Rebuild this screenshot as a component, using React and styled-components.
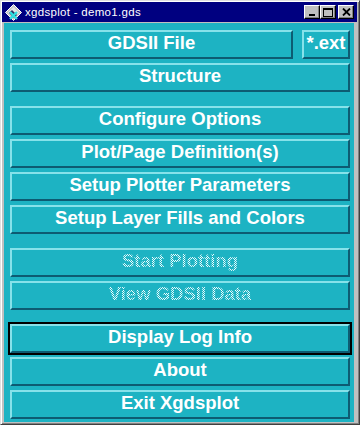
import React from 'react';
import styled, { createGlobalStyle, css } from 'styled-components';

const GlobalStyle = createGlobalStyle`
  html, body {
    margin: 0;
    padding: 0;
    background: #c0c0c0;
  }
`;

const Window = styled.div`
  width: 360px;
  height: 425px;
  box-sizing: border-box;
  background: #c0c0c0;
  border-top: 1px solid #dfdfdf;
  border-left: 1px solid #dfdfdf;
  border-right: 1px solid #404040;
  border-bottom: 1px solid #404040;
  box-shadow: inset 1px 1px 0 #ffffff, inset -1px -1px 0 #808080;
  padding: 1px 2px 4px 1px;
  display: flex;
  flex-direction: column;
`;

const TitleBar = styled.div`
  height: 20px;
  background: #000080;
  display: flex;
  align-items: center;
  padding: 0 3px 0 3px;
  flex-shrink: 0;
`;

const TitleText = styled.span`
  font-family: "Liberation Sans", Arial, sans-serif;
  font-size: 11.5px;
  color: #ffffff;
  margin-left: 3px;
  flex: 1;
  letter-spacing: 0.3px;
`;

const TitleButtons = styled.div`
  display: flex;
  align-items: center;
`;

const TitleButton = styled.div`
  width: 16px;
  height: 14px;
  box-sizing: border-box;
  background: #c0c0c0;
  border-top: 1px solid #ffffff;
  border-left: 1px solid #ffffff;
  border-right: 1px solid #000000;
  border-bottom: 1px solid #000000;
  box-shadow: inset -1px -1px 0 #808080;
  display: flex;
  align-items: center;
  justify-content: center;
  margin-left: ${(p) => (p.$gap ? '2px' : '0')};
`;

const Client = styled.div`
  flex: 1;
  margin: 1px 3px 0 2px;
  background: #1db3c3;
  padding: 7px 4px 3px 6px;
  display: flex;
  flex-direction: column;
  gap: 14px;
`;

const Group = styled.div`
  display: flex;
  flex-direction: column;
  gap: 4px;
`;

const Row = styled.div`
  display: flex;
  gap: 9px;
`;

const stipple = css`
  color: transparent;
  background: conic-gradient(#f0fcfd 25%, transparent 0 50%, #f0fcfd 0 75%, transparent 0) 0 0 / 2px 2px;
  -webkit-background-clip: text;
  background-clip: text;
`;

const Button = styled.div`
  flex: ${(p) => (p.$grow ? '1 1 0' : '0 0 auto')};
  width: ${(p) => (p.$narrow ? '48px' : 'auto')};
  height: 29px;
  box-sizing: border-box;
  border-style: solid;
  border-width: 2px;
  border-color: #86e2ea #0d5b72 #0d5b72 #86e2ea;
  background: #1db3c3;
  display: flex;
  align-items: center;
  justify-content: center;
  font-family: "Liberation Sans", Arial, Helvetica, sans-serif;
  font-weight: bold;
  font-size: 18.5px;
  color: #ffffff;
  white-space: nowrap;
  ${(p) => p.$focused && css`
    outline: 2px solid #000000;
    outline-offset: 0;
  `}
`;

const Label = styled.span`
  line-height: 1;
  margin-top: -2px;
  ${(p) => p.$disabled && stipple}
`;

const AppIcon = () => (
  <svg width="17" height="17" viewBox="0 0 17 17">
    <polygon points="8.5,0.5 16.5,8.5 8.5,16.5 0.5,8.5" fill="#c8c8c8" stroke="#ffffff" strokeWidth="1" />
    <polygon points="8.5,3 14,8.5 8.5,14 3,8.5" fill="#e6e6e6" />
    <polygon points="4,9 9,14 12,11 7,6" fill="#303060" />
    <path d="M5 8 L12 15 M12 8 L5 15" stroke="#2fe0e0" strokeWidth="2.4" />
  </svg>
);

const App = () => (
  <>
    <GlobalStyle />
    <Window>
      <TitleBar>
        <AppIcon />
        <TitleText>xgdsplot - demo1.gds</TitleText>
        <TitleButtons>
          <TitleButton>
            <svg width="8" height="8" viewBox="0 0 8 8">
              <rect x="1" y="6" width="6" height="2" fill="#000" />
            </svg>
          </TitleButton>
          <TitleButton>
            <svg width="10" height="9" viewBox="0 0 10 9">
              <rect x="0.5" y="0.5" width="9" height="8" fill="none" stroke="#000" />
              <rect x="0" y="0" width="10" height="2" fill="#000" />
            </svg>
          </TitleButton>
          <TitleButton $gap>
            <svg width="9" height="8" viewBox="0 0 9 8">
              <path d="M1 0.5 L8 7.5 M8 0.5 L1 7.5" stroke="#000" strokeWidth="1.8" />
            </svg>
          </TitleButton>
        </TitleButtons>
      </TitleBar>
      <Client>
        <Group>
          <Row>
            <Button $grow><Label>GDSII File</Label></Button>
            <Button $narrow><Label>*.ext</Label></Button>
          </Row>
          <Button><Label>Structure</Label></Button>
        </Group>
        <Group>
          <Button><Label>Configure Options</Label></Button>
          <Button><Label>Plot/Page Definition(s)</Label></Button>
          <Button><Label>Setup Plotter Parameters</Label></Button>
          <Button><Label>Setup Layer Fills and Colors</Label></Button>
        </Group>
        <Group>
          <Button><Label $disabled>Start Plotting</Label></Button>
          <Button><Label $disabled>View GDSII Data</Label></Button>
        </Group>
        <Group>
          <Button $focused><Label>Display Log Info</Label></Button>
          <Button><Label>About</Label></Button>
          <Button><Label>Exit Xgdsplot</Label></Button>
        </Group>
      </Client>
    </Window>
  </>
);

export default App;
